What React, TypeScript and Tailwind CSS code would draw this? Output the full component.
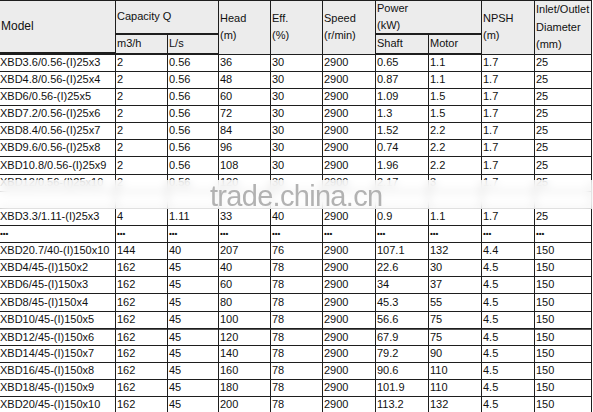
import React from 'react';

type Row = string[];

const rows: Row[] = [
  ['XBD3.6/0.56-(I)25x3', '2', '0.56', '36', '30', '2900', '0.65', '1.1', '1.7', '25'],
  ['XBD4.8/0.56-(I)25x4', '2', '0.56', '48', '30', '2900', '0.87', '1.1', '1.7', '25'],
  ['XBD6/0.56-(I)25x5', '2', '0.56', '60', '30', '2900', '1.09', '1.5', '1.7', '25'],
  ['XBD7.2/0.56-(I)25x6', '2', '0.56', '72', '30', '2900', '1.3', '1.5', '1.7', '25'],
  ['XBD8.4/0.56-(I)25x7', '2', '0.56', '84', '30', '2900', '1.52', '2.2', '1.7', '25'],
  ['XBD9.6/0.56-(I)25x8', '2', '0.56', '96', '30', '2900', '0.74', '2.2', '1.7', '25'],
  ['XBD10.8/0.56-(I)25x9', '2', '0.56', '108', '30', '2900', '1.96', '2.2', '1.7', '25'],
  ['XBD12/0.56-(I)25x10', '2', '0.56', '120', '30', '2900', '2.17', '3', '1.7', '25'],
  // this row sits under the watermark and can't be read in the photo
  ['', '', '', '', '', '', '', '', '', ''],
  ['XBD3.3/1.11-(I)25x3', '4', '1.11', '33', '40', '2900', '0.9', '1.1', '1.7', '25'],
  ['•••', '•••', '•••', '•••', '•••', '•••', '•••', '•••', '•••', '•••'],
  ['XBD20.7/40-(I)150x10', '144', '40', '207', '76', '2900', '107.1', '132', '4.4', '150'],
  ['XBD4/45-(I)150x2', '162', '45', '40', '78', '2900', '22.6', '30', '4.5', '150'],
  ['XBD6/45-(I)150x3', '162', '45', '60', '78', '2900', '34', '37', '4.5', '150'],
  ['XBD8/45-(I)150x4', '162', '45', '80', '78', '2900', '45.3', '55', '4.5', '150'],
  ['XBD10/45-(I)150x5', '162', '45', '100', '78', '2900', '56.6', '75', '4.5', '150'],
  ['XBD12/45-(I)150x6', '162', '45', '120', '78', '2900', '67.9', '75', '4.5', '150'],
  ['XBD14/45-(I)150x7', '162', '45', '140', '78', '2900', '79.2', '90', '4.5', '150'],
  ['XBD16/45-(I)150x8', '162', '45', '160', '78', '2900', '90.6', '110', '4.5', '150'],
  ['XBD18/45-(I)150x9', '162', '45', '180', '78', '2900', '101.9', '110', '4.5', '150'],
  ['XBD20/45-(I)150x10', '162', '45', '200', '78', '2900', '113.2', '132', '4.5', '150'],
];

// a few rows are a pixel taller so the grid lands on the photo's lines
const tallRows = [6, 14];

const head = 'bg-[#ececec] pl-px text-[11px] leading-[17.5px] flex items-center';

export default function App() {
  return (
    <div className="relative w-[593px] h-[412px] overflow-hidden bg-white text-[#111] font-['Liberation_Sans',Arial,sans-serif]">
      <div className="grid w-[592px] grid-cols-[115px_51px_50px_51px_51px_52px_52px_52px_52px_56px] gap-px bg-[#1e1e1e] pt-px pr-px pb-px">
        <div className={`${head} row-span-2 h-[51px] text-[12px]`}>Model</div>
        <div className={`${head} col-span-2 h-[32px]`}>Capacity Q</div>
        <div className={`${head} row-span-2`}>
          <span>Head<br />(m)</span>
        </div>
        <div className={`${head} row-span-2`}>
          <span>Eff.<br />(%)</span>
        </div>
        <div className={`${head} row-span-2`}>
          <span>Speed<br />(r/min)</span>
        </div>
        <div className={`${head} col-span-2 h-[32px]`}>
          <span>Power<br />(kW)</span>
        </div>
        <div className={`${head} row-span-2`}>
          <span>NPSH<br />(m)</span>
        </div>
        <div className={`${head} row-span-2`}>
          <span>Inlet/Outlet<br />Diameter<br />(mm)</span>
        </div>
        <div className={`${head} col-start-2 row-start-2 h-[18px]`}>m3/h</div>
        <div className={`${head} col-start-3 row-start-2 h-[18px]`}>L/s</div>
        <div className={`${head} col-start-7 row-start-2 h-[18px]`}>Shaft</div>
        <div className={`${head} col-start-8 row-start-2 h-[18px]`}>Motor</div>

        {rows.map((r, i) =>
          r.map((c, j) => (
            <div
              key={`${i}-${j}`}
              className={`bg-white flex items-center whitespace-nowrap ${j === 0 ? 'pl-0' : 'pl-px'} ${
                tallRows.includes(i) ? 'h-[17px]' : 'h-[16px]'
              } ${i === 16 ? 'border-t border-[#555]' : ''} ${
                c === '•••' ? 'text-[8px] font-bold leading-none' : 'text-[11px]'
              }`}
            >
              {c}
            </div>
          ))
        )}
      </div>

      {/* watermark band */}
      <div className="absolute left-0 right-0 top-[180px] h-[29px] bg-white/75 backdrop-blur-[4px]" />
      <div className="absolute left-[210px] top-[182px] text-[29px] leading-[29px] tracking-[-0.7px] text-[#b2b2b2]">
        trade.china.cn
      </div>
    </div>
  );
}
